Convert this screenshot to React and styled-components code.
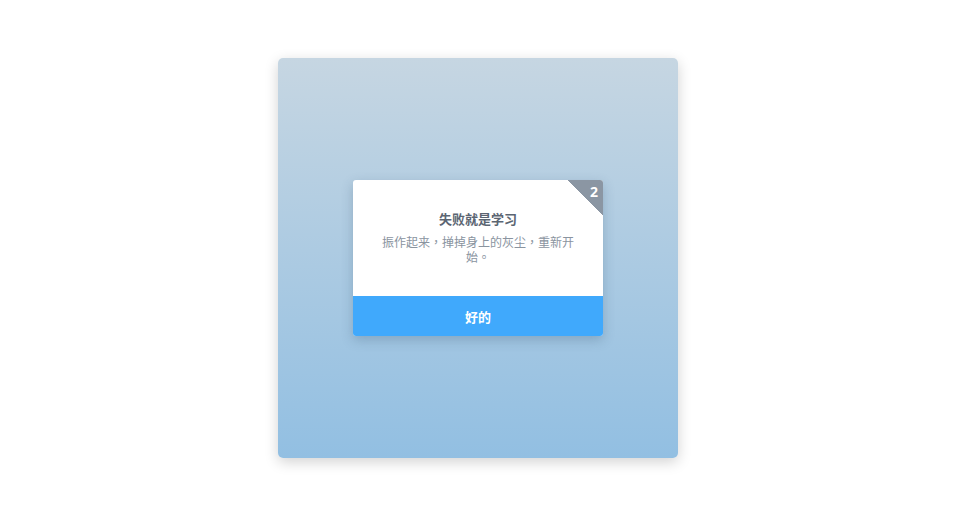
import React from "react";
import styled, { createGlobalStyle } from "styled-components";

const GlobalStyle = createGlobalStyle`
  html, body {
    margin: 0;
    padding: 0;
    background: #ffffff;
    font-family: "Noto Sans CJK TC", "Open Sans", "Liberation Sans", sans-serif;
  }
`;

const Page = styled.div`
  width: 954px;
  height: 510px;
  display: flex;
  justify-content: center;
  padding: 58px 0 0 2px;
  box-sizing: border-box;
`;

const Stage = styled.div`
  width: 400px;
  height: 400px;
  border-radius: 5px;
  background: linear-gradient(180deg, #c6d6e2 0%, #92bfe2 100%);
  box-shadow: 0 4px 14px rgba(0, 0, 0, 0.18);
  display: flex;
  align-items: center;
  justify-content: center;
`;

const Dialog = styled.div`
  position: relative;
  width: 250px;
  background: #ffffff;
  border-radius: 3px;
  overflow: hidden;
  box-shadow: 0 4px 12px rgba(40, 70, 100, 0.25);
`;

const Body = styled.div`
  padding: 30px 25px 32px;
  text-align: center;
`;

const Title = styled.div`
  font-size: 13px;
  line-height: 18px;
  font-weight: 700;
  color: #5b6572;
`;

const Desc = styled.div`
  margin-top: 6px;
  font-size: 12px;
  line-height: 15px;
  color: #8a949f;
`;

const Corner = styled.div`
  position: absolute;
  top: 0;
  right: 0;
  width: 35px;
  height: 35px;
  background: linear-gradient(45deg, transparent 50%, #8b96a3 50%);
`;

const Badge = styled.span`
  position: absolute;
  top: 2px;
  right: 5px;
  font-family: "Open Sans", "Liberation Sans", sans-serif;
  font-size: 14px;
  font-weight: 700;
  color: #ffffff;
`;

const Button = styled.button`
  display: block;
  width: 100%;
  height: 40px;
  border: none;
  background: #40a9fc;
  color: #ffffff;
  font-family: inherit;
  font-size: 13px;
  font-weight: 700;
  cursor: pointer;
`;

const App = () => {
  return (
    <>
      <GlobalStyle />
      <Page>
        <Stage>
          <Dialog>
            <Corner>
              <Badge>2</Badge>
            </Corner>
            <Body>
              <Title>失败就是学习</Title>
              <Desc>振作起来，掸掉身上的灰尘，重新开始。</Desc>
            </Body>
            <Button>好的</Button>
          </Dialog>
        </Stage>
      </Page>
    </>
  );
};

export default App;
